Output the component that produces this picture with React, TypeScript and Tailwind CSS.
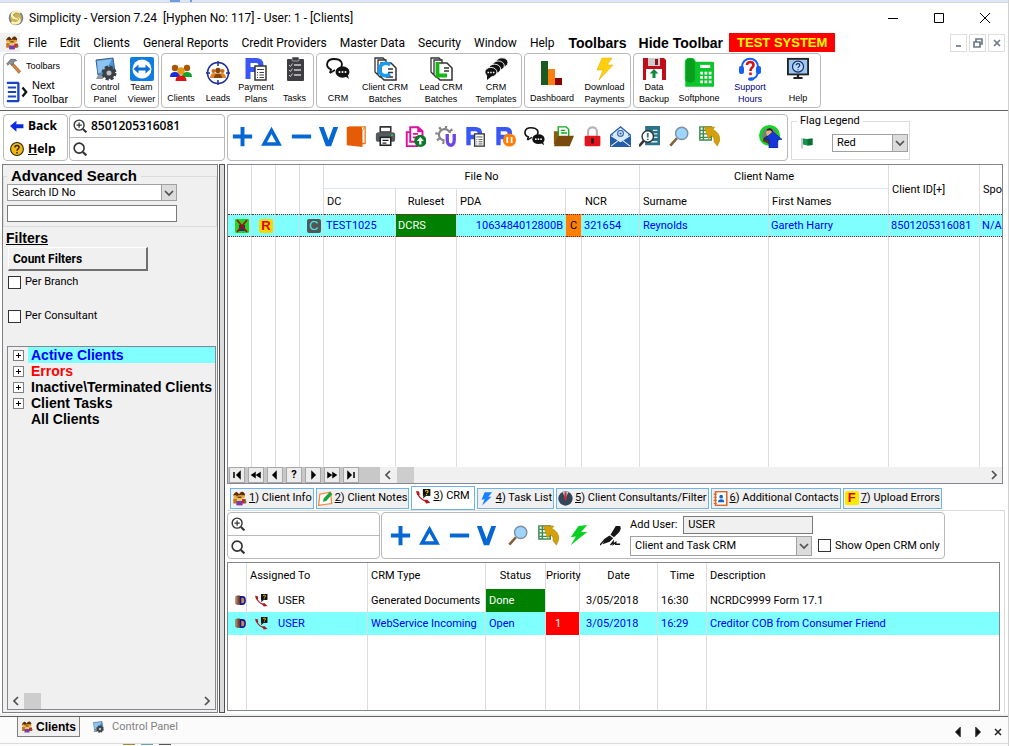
import { clsx } from "clsx";
import type { ReactNode } from "react";

const BLUE = "#0567d3";

const art: Record<string, ReactNode> = {
  people: (
    <>
      <circle cx="7" cy="6" r="4" fill="#b5651d" />
      <circle cx="16" cy="5" r="4" fill="#8b4a12" />
      <circle cx="12" cy="10" r="5" fill="#e0a020" />
      <path d="M2 6 L7 1 L11 5 L17 1 L21 5 L19 9 L15 6 L9 7 L4 11 Z" fill="#5a2d0c" />
      <path d="M2 12 H8 V20 H2 Z" fill="#c87818" />
      <path d="M16 13 H22 V20 H16 Z" fill="#e01818" />
      <path d="M7 16 H17 V23 H7 Z" fill="#7c3ca8" />
      <circle cx="12" cy="12" r="4" fill="#f4c060" />
      <circle cx="5" cy="9" r="2.500" fill="#f0b040" />
      <circle cx="18" cy="9" r="2.500" fill="#e8a830" />
      <path d="M9 9 H15 V11 H9 Z" fill="#4a2a10" />
      <path d="M19 16 H23 V19 H19 Z" fill="#2a9a2a" />
    </>
  ),
  coin: (
    <>
      <circle cx="12" cy="12" r="11" fill="#77838d" />
      <circle cx="12" cy="12" r="8.500" fill="#c9b45a" />
      <path d="M18 5 C12 0 4 5 7 10 C9 13 16 11 17 15 C18 19 11 22 5 18" fill="none" stroke="#fff3b0" strokeWidth="4" />
      <path d="M17 6 C12 3 7 5 9 9 C11 12 17 11 16 15" fill="none" stroke="#85702a" strokeWidth="1" />
    </>
  ),
  hammer: (
    <>
      <path d="M10 7 L22 20 L19 23 L8 10 Z" fill="#d9823b" stroke="#9c5520" />
      <path d="M1 9 L7 2 L14 2 L16 4 L12 5 L11 9 L8 11 L6 8 L3 11 Z" fill="#8a8f94" stroke="#5c6064" />
    </>
  ),
  nextBar: (
    <>
      <path d="M1 2 H14 M1 22 H14 M13.500 2 V22" fill="none" stroke="#1745c4" strokeWidth="2.500" />
      <path d="M2 7 H11 M2 12 H11 M2 17 H11" stroke="#1745c4" strokeWidth="2.200" />
      <path d="M18 7 L22 12 L18 17" fill="none" stroke="#111" strokeWidth="2.500" />
    </>
  ),
  control: (
    <>
      <path d="M3 3 L20 1 L22 15 L5 18 Z" fill="#4a94dc" stroke="#3f5f85" />
      <path d="M4 4 L19 2 L12 15 L5 16 Z" fill="#8cc3f0" />
      <path d="M5 18 L10 17 L10 22 H3 Z" fill="#8e98a3" />
      <circle cx="16" cy="16" r="6" fill="#3c4146" stroke="#3c4146" strokeWidth="3" strokeDasharray="3 1.700" />
      <circle cx="16" cy="16" r="2.500" fill="#b9c0c7" />
    </>
  ),
  team: (
    <>
      <rect width="24" height="24" rx="2" fill="#0e7de0" />
      <circle cx="12" cy="12" r="9.500" fill="#fff" />
      <path d="M3.500 12 L8.500 7.500 V10.500 H15.500 V7.500 L20.500 12 L15.500 16.500 V13.500 H8.500 V16.500 Z" fill="#0e6fd0" />
    </>
  ),
  clients: (
    <>
      <circle cx="6" cy="7" r="3.200" fill="#a8560c" />
      <circle cx="18" cy="7" r="3.200" fill="#a8560c" />
      <path d="M1 16 Q1 11 6 11 Q11 11 11 16 Z" fill="#1530d8" />
      <path d="M13 16 Q13 11 18 11 Q23 11 23 16 Z" fill="#12a52c" />
      <circle cx="12" cy="10" r="3.700" fill="#e39a14" />
      <path d="M6.500 20 Q6.500 14.500 12 14.500 Q17.500 14.500 17.500 20 Z" fill="#d81616" />
    </>
  ),
  leads: (
    <>
      <circle cx="12" cy="12" r="10.500" fill="#fff" stroke="#1c2f9c" strokeWidth="1.500" />
      <path d="M12 0 V5 M12 19 V24 M0 12 H4 M20 12 H24" stroke="#1c2f9c" strokeWidth="1.500" />
      <circle cx="7.500" cy="10" r="2" fill="#c96a12" />
      <circle cx="16.500" cy="10" r="2" fill="#c96a12" />
      <circle cx="12" cy="9.500" r="2.700" fill="#8a4208" />
      <path d="M4 16 Q5 12 8 12 Q12 12 12 17 H4 Z M20 16 Q19 12 16 12 Q12 12 12 17 H20 Z" fill="#e0862a" />
      <path d="M8 17 Q8 12.500 12 12.500 Q16 12.500 16 17 Z" fill="#8a4208" />
    </>
  ),
  plan: (
    <>
      <path d="M4 22 V3.500 H12 Q17 3.500 17 8 Q17 12.500 12 12.500 H5" fill="none" stroke="#3a56f5" strokeWidth="5" />
      <rect x="11" y="9" width="11" height="14" fill="#fff" stroke="#333" strokeWidth="1.500" />
      <path d="M13 12.500 H20 M15.500 15.500 H20 M15.500 18 H20 M15.500 20.500 H20 M13 15.500 H14 M13 18 H14 M13 20.500 H14" stroke="#444" />
    </>
  ),
  planPause: (
    <>
      <path d="M4 22 V3.500 H12 Q17 3.500 17 8 Q17 12.500 12 12.500 H5" fill="none" stroke="#3a56f5" strokeWidth="5" />
      <circle cx="16.500" cy="16" r="7.500" fill="#ff7d0a" />
      <path d="M14 12.500 V19.500 M19 12.500 V19.500" stroke="#fff" strokeWidth="2" />
    </>
  ),
  tasks: (
    <>
      <rect x="4" y="2" width="17" height="22" rx="1" fill="#3d3d42" />
      <rect x="9" y="0" width="7" height="4" rx="1" fill="#3d3d42" stroke="#c8c8c8" strokeWidth="0.700" />
      <path d="M11 8 H18 M11 13 H18 M11 18 H18" stroke="#cfcfcf" strokeWidth="1.500" />
      <path d="M6 8 L7.500 9.500 L9.500 6.500 M6 13 L7.500 14.500 L9.500 11.500 M6 18 L7.500 19.500 L9.500 16.500" fill="none" stroke="#cfcfcf" />
    </>
  ),
  chat: (
    <>
      <path d="M4 16 L5 12.500 C-1 10 0 2 8 2 C16 2 17 7 15 10" fill="none" stroke="#111" strokeWidth="1.800" />
      <path d="M4 16 L9 13" stroke="#111" strokeWidth="1.500" />
      <ellipse cx="16.500" cy="15" rx="7" ry="5.700" fill="#111" />
      <path d="M19 19 L23 22 L21.500 17 Z" fill="#111" />
      <circle cx="13.500" cy="15" r="1" fill="#fff" />
      <circle cx="16.500" cy="15" r="1" fill="#fff" />
      <circle cx="19.500" cy="15" r="1" fill="#fff" />
    </>
  ),
  batchC: (
    <>
      <path d="M2 1 H10 L12 3 V17 H4 L2 15 Z" fill="#fff" stroke="#333" strokeWidth="1.300" />
      <path d="M5 3 H13 V20 H7 L5 18 Z" fill="#fff" stroke="#333" strokeWidth="1.300" />
      <path d="M8 6 H18 L23 11 V23 H11 L8 20 Z" fill="#fff" stroke="#333" strokeWidth="1.500" />
      <path d="M15 12 H20 M15 15.500 H20 M13 20 H20" stroke="#333" strokeWidth="1.300" />
      <path d="M17 8 C13 4.500 6.500 7 6.500 12.500 C6.500 18 12 20.500 17 17" fill="none" stroke="#169cf5" strokeWidth="3.500" />
    </>
  ),
  batchL: (
    <>
      <path d="M2 1 H10 L12 3 V17 H4 L2 15 Z" fill="#fff" stroke="#333" strokeWidth="1.300" />
      <path d="M5 3 H13 V20 H7 L5 18 Z" fill="#fff" stroke="#333" strokeWidth="1.300" />
      <path d="M8 6 H18 L23 11 V23 H11 L8 20 Z" fill="#fff" stroke="#333" strokeWidth="1.500" />
      <path d="M15 11 H20 M15 14 H20" stroke="#333" strokeWidth="1.300" />
      <path d="M8.500 5 V18.500 H18" fill="none" stroke="#14b814" strokeWidth="3.800" />
    </>
  ),
  templates: (
    <>
      {[0, 1, 2, 3].map((i) => (
        <ellipse key={i} cx={18 - i * 3.7} cy={5.5 + i * 3.2} rx="6" ry="4.700" fill="#111" stroke="#fff" strokeWidth="0.900" />
      ))}
      <path d="M3 18 L3 23 L8 19 Z" fill="#111" />
      <path d="M3.500 15.500 H10.500" stroke="#fff" strokeWidth="1.600" strokeDasharray="1.500 1.200" />
    </>
  ),
  chart: (
    <>
      <rect x="1" y="0" width="7" height="24" fill="#1d5a22" />
      <rect x="8" y="8" width="7" height="16" fill="#ff7f0e" />
      <rect x="15" y="17" width="7" height="7" fill="#8b0000" />
    </>
  ),
  bolt: <path d="M9 1 H19 L14 8 H20 L6 23 L10 13 H4 Z" fill="#ffcf0a" stroke="#d8a800" strokeWidth="0.500" />,
  boltGreen: <path d="M12 1 L22 0 L15 8 L22 8 L3 23 L9 13 L3 14 Z" fill="#08d022" />,
  boltBlue: <path d="M9 2 L21 2 L15 9 L20 9 L5 23 L9 13 L4 14 Z" fill="#1583ff" />,
  floppy: (
    <>
      <path d="M1 1 H22 L24 3 V23 H1 Z" fill="#c00d19" />
      <rect x="6" y="1" width="12" height="8" fill="#ccc" />
      <rect x="13" y="2" width="3" height="6" fill="#8d1118" />
      <rect x="4" y="12" width="16" height="11" fill="#fff" />
      <path d="M12 12 L16.500 16.500 H13.500 V21 H10.500 V16.500 H7.500 Z" fill="#0f8a3c" />
    </>
  ),
  phone: (
    <>
      <path d="M8 3 H23 Q24 3 24 4 V23 H1 V10 H8 Z" fill="#0cc52c" />
      <rect x="1" y="0" width="8" height="20" rx="3.500" fill="#0a9e1e" stroke="#0cc52c" strokeWidth="0.800" />
      <rect x="13" y="5.500" width="8" height="2.500" fill="#fff" />
      <path d="M13 12 H22 M13 15.500 H22 M13 19 H22" stroke="#fff" strokeWidth="2.200" strokeDasharray="2.200 1.200" />
    </>
  ),
  support: (
    <>
      <path d="M4 13 V10 C4 -1 20 -1 20 10 V13 C20 19 18 21 14 22" fill="none" stroke="#1560f0" strokeWidth="2" />
      <rect x="1" y="9" width="5" height="8" rx="2" fill="#1560f0" />
      <rect x="18" y="9" width="5" height="8" rx="2" fill="#1560f0" />
      <ellipse cx="13" cy="22" rx="3" ry="1.800" fill="#1560f0" />
      <path d="M9 8 C9 4 15.500 4 15.500 8 C15.500 10.500 12.500 10.500 12.500 14" fill="none" stroke="#d41414" strokeWidth="2.600" />
      <rect x="11.200" y="15.500" width="2.600" height="2.600" fill="#d41414" />
    </>
  ),
  monitor: (
    <>
      <rect x="1" y="2" width="22" height="17" fill="#9cc7f0" stroke="#222" strokeWidth="2" />
      <circle cx="12" cy="10.500" r="6" fill="#b9dbf8" stroke="#132a6e" strokeWidth="1.300" />
      <path d="M10 9 C10 6.500 14 6.500 14 9 C14 10.500 12 10.500 12 12 M12 13.300 V14.500" fill="none" stroke="#132a6e" strokeWidth="1.300" />
      <path d="M12 19 V22 M7 23 H17" stroke="#222" strokeWidth="2.500" />
    </>
  ),
  plus: <path d="M12 1 V23 M1 12 H23" stroke={BLUE} strokeWidth="4.500" />,
  triangle: <path d="M12 5 L20.500 20.500 H3.500 Z" fill="none" stroke={BLUE} strokeWidth="4" />,
  minus: <path d="M1 12 H23" stroke={BLUE} strokeWidth="4.500" />,
  vee: <path d="M1 1 H6.500 L12 16 L17.500 1 H23 L15 23 H9 Z" fill={BLUE} />,
  door: (
    <>
      <path d="M4 1 H23 V20 H19" fill="none" stroke="#e87818" strokeWidth="1.500" />
      <path d="M2 1 H19 L20 5 V24 L2 22 Z" fill="#e65c05" />
      <path d="M20 5 L23 1" stroke="#e87818" />
    </>
  ),
  printer: (
    <>
      <path d="M6 1 H18 V7 H6 Z" fill="#fff" stroke="#333" strokeWidth="1.800" />
      <rect x="1" y="7" width="22" height="11" rx="3" fill="#555a5f" />
      <rect x="6" y="13" width="12" height="9" fill="#fff" stroke="#222" strokeWidth="1.800" />
      <path d="M8.500 16.500 H15.500 M8.500 19.500 H13" stroke="#222" strokeWidth="1.400" />
      <circle cx="19.500" cy="10.500" r="1.200" fill="#21d04a" />
    </>
  ),
  docUp: (
    <>
      <path d="M2 7 V23 H14 V7 Z" fill="#fff" stroke="#e00e9c" strokeWidth="2.200" />
      <path d="M6 1.500 H15 L20 6 V18 H6 Z" fill="#fff" stroke="#e00e9c" strokeWidth="2.200" />
      <path d="M14 1 V7 H20 Z" fill="#e00e9c" />
      <path d="M9 9 H15 M9 13 H14" stroke="#e00e9c" strokeWidth="2" />
      <circle cx="17.500" cy="17" r="7" fill="#0b7a2a" />
      <path d="M17.500 12.500 L21.500 17 H18.800 V21 H16.200 V17 H13.500 Z" fill="#fff" />
    </>
  ),
  gearU: (
    <>
      <circle cx="11" cy="10" r="6.500" fill="none" stroke="#858585" strokeWidth="2.500" />
      <circle cx="11" cy="10" r="9" fill="none" stroke="#858585" strokeWidth="3.500" strokeDasharray="2.500 4.570" />
      <path d="M11 8 H24 V24 H11 Z" fill="#fff" />
      <path d="M14 9 V16 C14 24 22 24 22 16 V9" fill="none" stroke="#6d45e8" strokeWidth="3.800" />
    </>
  ),
  folder: (
    <>
      <path d="M1 6 H7 V21 H1 Z" fill="#8b5a0c" />
      <path d="M6 1 H15 L18 4 V15 H6 Z" fill="#fff" stroke="#0cae1c" strokeWidth="1.600" />
      <path d="M9 5 H14 M9 8 H16" stroke="#0cae1c" strokeWidth="1.500" />
      <path d="M6 11 H24 L19 23 H1 Z" fill="#7a4a0c" />
    </>
  ),
  lock: (
    <>
      <path d="M7 11 V6 C7 0 17 0 17 6 V11" fill="none" stroke="#b5b5b5" strokeWidth="2.500" />
      <rect x="3" y="11" width="18" height="12" rx="1.500" fill="#e3131b" />
      <path d="M12 14 V20" stroke="#222" strokeWidth="3" />
    </>
  ),
  mail: (
    <>
      <path d="M0 10 L12 0 L24 10 V24 H0 Z" fill="#255ba8" />
      <path d="M3 9 L12 2 L21 9 V12 L12 18 L3 12 Z" fill="#d7ebfb" />
      <circle cx="12" cy="8.500" r="3.300" fill="none" stroke="#255ba8" strokeWidth="1.200" />
      <circle cx="12" cy="8.500" r="1.200" fill="#255ba8" />
      <path d="M1 11 L12 18 L23 11 M1 23 L9 17 M23 23 L15 17" fill="none" stroke="#eaf4fc" strokeWidth="1.200" />
    </>
  ),
  audit: (
    <>
      <rect x="7" y="0" width="17" height="22" fill="#2b7389" />
      <path d="M16 5 H21 M17 9 H21 M17 13 H21 M13 18 H21" stroke="#dcecf0" strokeWidth="1.500" />
      <circle cx="10" cy="12" r="6.500" fill="#fff" stroke="#333" strokeWidth="1.600" />
      <path d="M10 8 V13 M10 14.500 V16" stroke="#2b7389" strokeWidth="2" />
      <path d="M5.500 17 L0 23" stroke="#333" strokeWidth="3" />
    </>
  ),
  find: (
    <>
      <path d="M9 14 L1.500 22.500" stroke="#83603a" strokeWidth="3" />
      <circle cx="14.500" cy="8.500" r="7" fill="#9fd4fb" stroke="#7d8fa0" strokeWidth="1.600" />
    </>
  ),
  excel: (
    <>
      <path d="M1 1 H14 V16 H1 Z M1 5 H14 M1 9 H14 M1 13 H14 M5 1 V16" fill="#fff" stroke="#3a8c50" strokeWidth="1.700" />
      <path d="M6 1 H18 L16 4 Q24 8 24 16 L21 23 L17 18 Q18 13 14 11 L11 15 Z" fill="#d3a00c" stroke="#a97c00" strokeWidth="0.500" />
    </>
  ),
  userUp: (
    <>
      <circle cx="11" cy="11" r="9.500" fill="#6b8a70" stroke="#18d428" strokeWidth="3" />
      <path d="M4 17 Q4 11 11 11 Q18 11 18 17 L11 20 Z" fill="#5a3a28" />
      <circle cx="11" cy="8" r="3.500" fill="#e3b082" />
      <path d="M7.500 6 Q11 1 14.500 6 V8 L12 5.500 Z" fill="#1b1b1b" />
      <path d="M14.500 7 L24 15 H19.500 V24 H10.500 V15 H5.500 Z" fill="#1438dc" stroke="#0a1a78" strokeWidth="0.700" />
    </>
  ),
  pen: (
    <>
      <path d="M18 1 L23 1 Q25 5 21 9 L16 14 L12 11 Z" fill="#161616" />
      <path d="M11 12 L15 15 L11 19 L3 22 L6 15 Z" fill="#161616" />
      <path d="M0 23 L6 16" stroke="#161616" strokeWidth="1.500" />
      <path d="M12 23 L15 19 V22 L18 20 V22 H23" fill="none" stroke="#161616" strokeWidth="1.700" />
    </>
  ),
  back: <path d="M0 12 L11 3 V9 H23 V16 H11 V22 Z" fill="#0a2be0" />,
  help: (
    <>
      <circle cx="12" cy="12" r="11" fill="#f1b713" stroke="#2b2410" strokeWidth="1.800" />
      <path d="M8.500 9.500 C8.500 5 15.500 5 15.500 9.500 C15.500 12 12 12 12 15 M12 17 V19.500" fill="none" stroke="#2b2410" strokeWidth="2.500" />
    </>
  ),
  zoomIn: (
    <>
      <circle cx="10.500" cy="10.500" r="8.500" fill="none" stroke="#333" strokeWidth="2.400" />
      <path d="M17 17 L23 23" stroke="#333" strokeWidth="3.500" />
      <path d="M10.500 6 V15 M6 10.500 H15" stroke="#333" strokeWidth="2.200" />
    </>
  ),
  zoom: (
    <>
      <circle cx="10.500" cy="10.500" r="8.500" fill="none" stroke="#333" strokeWidth="2.800" />
      <path d="M17 17 L23 23" stroke="#333" strokeWidth="3.800" />
    </>
  ),
  flag: (
    <>
      <path d="M2 2 V23" stroke="#8d98a3" strokeWidth="2" />
      <path d="M4 3 L13 4 L23 3 V16 L13 17 L4 15 Z" fill="#13924b" />
      <path d="M13 4 L23 3 V16 L13 17 Z" fill="#0b6f36" />
    </>
  ),
  notes: (
    <>
      <path d="M3 5 L20 2 L22 20 L1 23 Z" fill="#fff" stroke="#f08a3c" strokeWidth="2" />
      <path d="M8 17 L9 12 L19 1 L23 5 L13 16 Z" fill="#18a53a" />
    </>
  ),
  call: (
    <>
      <path d="M3 6 Q4 15 16 20" fill="none" stroke="#b01820" strokeWidth="2" />
      <path d="M0 3 L5 4 L6 9 L2 10 Z M13 17 L18 17 L23 22 L16 23 Z" fill="#b01820" />
      <rect x="11" y="0" width="12" height="11" fill="#111" />
      <path d="M15 4 Q15 2 17 2 Q20 2 19 5 L17 6.500 M17 8 V9.500" fill="none" stroke="#f5d020" strokeWidth="1.700" />
      <path d="M12 11 L11 15 L16 11 Z" fill="#111" />
    </>
  ),
  consultant: (
    <>
      <circle cx="12" cy="12" r="11.500" fill="#33475b" />
      <path d="M7 1 L12 12 L17 1 Z" fill="#c8d0d8" />
      <path d="M10.500 2 H13.500 L14 12 L12 16 L10 12 Z" fill="#d02a2a" />
    </>
  ),
  contact: (
    <>
      <rect x="4" y="1" width="18" height="22" fill="#fff" stroke="#d8682a" strokeWidth="2.500" />
      <path d="M1 5 H6 M1 10 H6 M1 15 H6 M1 20 H6" stroke="#d8682a" strokeWidth="1.800" />
      <circle cx="13" cy="9" r="3" fill="#1565c0" />
      <path d="M8 18 Q8 13 13 13 Q18 13 18 18 Z" fill="#1565c0" />
    </>
  ),
  book: (
    <>
      <path d="M1 3 L5 1 H11 V21 H4 L1 18 Z" fill="#7b4b25" />
      <path d="M4 3 V19" stroke="#c9a27a" strokeWidth="2" />
      <path d="M12 4 H16 Q22 4 22 12 Q22 20 16 20 H12 Z" fill="#c58a5a" stroke="#14149a" strokeWidth="3.500" />
    </>
  ),
};

function Icon({ name, className = "size-6" }: { name: string; className?: string }) {
  return (
    <svg viewBox="0 0 24 24" className={clsx("shrink-0", className)} aria-hidden="true">
      {art[name]}
    </svg>
  );
}

const menu = [
  "File", "Edit", "Clients", "General Reports", "Credit Providers",
  "Master Data", "Security", "Window", "Help",
];

type Tool = { icon: string; label: string; width: string; top?: string; size?: string; tone?: string };

const toolGroups: Tool[][] = [
  [
    { icon: "control", label: "Control Panel", width: "w-10" },
    { icon: "team", label: "Team Viewer", width: "w-[33px]" },
  ],
  [
    { icon: "clients", label: "Clients", width: "w-[38px]", top: "pt-[7px]" },
    { icon: "leads", label: "Leads", width: "w-9", top: "pt-[7px]" },
    { icon: "plan", label: "Payment Plans", width: "w-10" },
    { icon: "tasks", label: "Tasks", width: "w-[37px]" },
  ],
  [
    { icon: "chat", label: "CRM", width: "w-[42px]" },
    { icon: "batchC", label: "Client CRM Batches", width: "w-[52px]" },
    { icon: "batchL", label: "Lead CRM Batches", width: "w-[60px]" },
    { icon: "templates", label: "CRM Templates", width: "w-[50px]" },
  ],
  [
    { icon: "chart", label: "Dashboard", width: "w-[54px]", top: "pt-[7px]" },
    { icon: "bolt", label: "Download Payments", width: "w-[51px]" },
  ],
  [
    { icon: "floppy", label: "Data Backup", width: "w-10" },
    { icon: "phone", label: "Softphone", width: "w-[50px]", top: "pt-1", size: "size-[30px]" },
    { icon: "support", label: "Support Hours", width: "w-[52px]", tone: "text-[#000080]" },
    { icon: "monitor", label: "Help", width: "w-11", size: "size-[22px]" },
  ],
];

const actions = [
  ["plus", "w-7"], ["triangle", "w-[30px]"], ["minus", "w-[30px]"], ["vee", "w-6"],
  ["door", "w-[30px]"], ["printer", "w-[30px]"], ["docUp", "w-[30px]"], ["gearU", "w-[30px]"],
  ["plan", "w-[30px]"], ["planPause", "w-[30px]"], ["chat", "w-7"], ["folder", "w-[30px]"],
  ["lock", "w-7"], ["mail", "w-7"], ["audit", "w-[30px]"], ["find", "w-[30px]"], ["excel", "w-[30px]"],
];

const crmActions = [
  ["plus", "w-7"], ["triangle", "w-[30px]"], ["minus", "w-[30px]"], ["vee", "w-6"],
  ["find", "w-10"], ["excel", "w-5"], ["boltGreen", "w-10"], ["pen", "w-6"],
];

const tree = [
  { label: "Active Clients", tone: "text-[#0000ff] bg-[#80ffff]", open: true },
  { label: "Errors", tone: "text-[#ff0000]", open: true },
  { label: "Inactive\\Terminated Clients", tone: "", open: true },
  { label: "Client Tasks", tone: "", open: true },
  { label: "All Clients", tone: "", open: false },
];

const tabs = [
  { icon: "people", label: "Client Info" },
  { icon: "notes", label: "Client Notes" },
  { icon: "call", label: "CRM" },
  { icon: "boltBlue", label: "Task List" },
  { icon: "consultant", label: "Client Consultants/Filter" },
  { icon: "contact", label: "Additional Contacts" },
  { icon: "", label: "Upload Errors" },
];

const crmRows = [
  { type: "Generated Documents", status: "Done", priority: "", date: "3/05/2018", time: "16:30", text: "NCRDC9999 Form 17.1" },
  { type: "WebService Incoming", status: "Open", priority: "1", date: "3/05/2018", time: "16:29", text: "Creditor COB from Consumer Friend" },
];

const navButtons = [
  { label: "First", d: "M3 3 V9 M9 3 L6 6 L9 9 Z" },
  { label: "Page back", d: "M5 4 L2 6 L5 8 Z M10 4 L7 6 L10 8 Z" },
  { label: "Previous", d: "M7 3 L4 6 L7 9 Z" },
  { label: "Find", d: "" },
  { label: "Next", d: "M5 3 L8 6 L5 9 Z" },
  { label: "Page forward", d: "M2 4 L5 6 L2 8 Z M7 4 L10 6 L7 8 Z" },
  { label: "Last", d: "M3 3 L6 6 L3 9 Z M9 3 V9" },
];

function Chevron({ d }: { d: string }) {
  return (
    <svg viewBox="0 0 10 10" className="size-2.5 shrink-0" aria-hidden="true">
      <path d={d} fill="none" stroke="#505050" strokeWidth="1.700" />
    </svg>
  );
}

function Select({ label, value, className }: { label: string; value: string; className?: string }) {
  return (
    <div className={clsx("relative flex", className)}>
      <select aria-label={label} className="w-full appearance-none border border-[#a0a0a0] bg-white pl-1 outline-none">
        <option>{value}</option>
      </select>
      <span className="pointer-events-none absolute inset-y-0 right-0 flex w-4 items-center justify-center border border-[#a0a0a0] bg-[#dcdcdc]">
        <Chevron d="M1 3 L5 7 L9 3" />
      </span>
    </div>
  );
}

function SearchPair({ id, value }: { id: string; value?: string }) {
  return (
    <div className="flex h-[47px] w-full flex-col rounded-[4px] border border-[#b9b9b9]">
      <label className="flex flex-1 items-center gap-1 border-b border-[#b9b9b9] pl-[3px]">
        <Icon name="zoomIn" className="size-[14px]" />
        <input id={`${id}-in`} aria-label="Search exact" defaultValue={value} className="w-full min-w-0 font-['Open_Sans',sans-serif] text-xs font-semibold outline-none" />
      </label>
      <label className="flex flex-1 items-center gap-1 pl-[3px]">
        <Icon name="zoom" className="size-[14px]" />
        <input id={`${id}-all`} aria-label="Search" className="w-full min-w-0 outline-none" />
      </label>
    </div>
  );
}

function ClientGrid() {
  const th = "border-[#dcdcdc] font-normal";
  const td = "overflow-hidden border-y border-r border-r-[#c8dede] border-y-[#802020] [border-top-style:dotted] [border-bottom-style:dotted] px-0.5";
  return (
    <div className="flex min-h-0 flex-1 flex-col border border-[#828790]">
      <div className="min-h-0 flex-1 overflow-hidden">
        <table className="h-full w-full table-fixed border-separate border-spacing-0 whitespace-nowrap">
          <colgroup>
            <col className="w-6" /><col className="w-6" /><col className="w-6" /><col className="w-6" />
            <col className="w-[72px]" /><col className="w-[61px]" /><col className="w-[109px]" />
            <col className="w-4" /><col className="w-[58px]" /><col className="w-[129px]" />
            <col className="w-[120px]" /><col className="w-[91px]" /><col />
          </colgroup>
          <thead>
            <tr className="h-6">
              {[0, 1, 2, 3].map((i) => <th key={i} rowSpan={2} className={clsx(th, "border-r")} />)}
              <th colSpan={5} className={clsx(th, "border-r border-b border-b-[#d8e6f2]")}>File No</th>
              <th colSpan={2} className={clsx(th, "border-r border-b border-b-[#d8e6f2]")}>Client Name</th>
              <th rowSpan={2} className={clsx(th, "border-r pl-[3px] text-left")}>Client ID[+]</th>
              <th rowSpan={2} className={clsx(th, "pl-[3px] text-left")}>Spo</th>
            </tr>
            <tr className="h-[25px]">
              <th className={clsx(th, "border-r pl-[3px] text-left")}>DC</th>
              <th className={clsx(th, "border-r")}>Ruleset</th>
              <th className={clsx(th, "border-r pl-[3px] text-left")}>PDA</th>
              <th className={th} />
              <th className={clsx(th, "border-r pl-[3px] text-left")}>NCR</th>
              <th className={clsx(th, "border-r pl-[3px] text-left")}>Surname</th>
              <th className={clsx(th, "border-r pl-[3px] text-left")}>First Names</th>
            </tr>
          </thead>
          <tbody>
            <tr className="h-[23px] bg-[#80ffff] text-[#0000ff]">
              <td className={td}>
                <svg viewBox="0 0 14 14" className="ml-auto size-3.5">
                  <rect width="14" height="14" rx="1" fill="#2fd01c" />
                  <path d="M4 6 H10 V12 H4 Z" fill="#1d2f8a" />
                  <path d="M2 1 L12 13 M12 1 L2 13" stroke="#a01408" strokeWidth="1.800" />
                </svg>
              </td>
              <td className={td}>
                <div className="ml-auto size-3.5 rounded-xs bg-[#f5d800] text-center font-['Liberation_Sans',sans-serif] text-[13px] leading-[14px] font-bold text-[#e00000]">R</div>
              </td>
              <td className={td} />
              <td className={td}>
                <div className="ml-auto size-3.5 rounded-xs bg-[#555] text-center font-['Liberation_Sans',sans-serif] text-[13px] leading-[14px] text-[#40e8f0]">C</div>
              </td>
              <td className={td}>TEST1025</td>
              <td className={clsx(td, "bg-[#008000] text-white")}>DCRS</td>
              <td className={clsx(td, "text-right")}>1063484012800B</td>
              <td className={clsx(td, "bg-[#ff8000] text-center text-black")}>C</td>
              <td className={td}>321654</td>
              <td className={clsx(td, "pl-[3px]")}>Reynolds</td>
              <td className={td}>Gareth Harry</td>
              <td className={td}>8501205316081</td>
              <td className={clsx(td, "border-r-0")}>N/A</td>
            </tr>
            <tr>
              {Array.from({ length: 13 }, (_, i) => (
                <td key={i} className={clsx(i < 12 && "border-r border-[#dcdcdc]")} />
              ))}
            </tr>
          </tbody>
        </table>
      </div>
      <div className="flex h-4 items-center bg-[#f0f0f0]">
        <div className="flex h-4 w-[152px] items-center gap-[3px] bg-[#c8c8c8] pl-px">
          {navButtons.map((b) => (
            <button key={b.label} aria-label={b.label} className="flex h-4 w-4 items-center justify-center border border-[#a8a8a8] bg-[#ececec] text-[11px] font-bold">
              {b.d ? (
                <svg viewBox="0 0 12 12" className="size-3 shrink-0"><path d={b.d} stroke="#000" strokeWidth="1.500" /></svg>
              ) : "?"}
            </button>
          ))}
        </div>
        <div className="flex h-4 flex-1 items-center pr-[3px] pl-[3px]">
          <Chevron d="M7 1 L3 5 L7 9" />
          <span className="ml-1 h-4 w-[17px] bg-[#cdcdcd]" />
          <span className="ml-auto flex"><Chevron d="M3 1 L7 5 L3 9" /></span>
        </div>
      </div>
    </div>
  );
}

function CrmGrid() {
  const heads = ["", "Assigned To", "CRM Type", "Status", "Priority", "Date", "Time", "Description"];
  const headAlign = ["", "pl-[3px] text-left", "pl-[3px] text-left", "text-center", "text-center", "text-center", "text-center", "pl-[3px] text-left"];
  return (
    <div className="mr-[3px] mb-0.5 flex-1 overflow-hidden border border-[#828790]">
      <table className="h-full w-full table-fixed border-separate border-spacing-0 whitespace-nowrap">
        <colgroup>
          <col className="w-[19px]" /><col className="w-[121px]" /><col className="w-[118px]" /><col className="w-[60px]" />
          <col className="w-[34px]" /><col className="w-[78px]" /><col className="w-[49px]" /><col />
        </colgroup>
        <thead>
          <tr className="h-[26px]">
            {heads.map((h, i) => (
              <th key={i} className={clsx("font-normal", headAlign[i], i < 7 && "border-r border-[#dcdcdc]")}>{h}</th>
            ))}
          </tr>
        </thead>
        <tbody className="[&_td]:border-[#dcdcdc] [&_td:not(:last-child)]:border-r">
          {crmRows.map((r, i) => (
            <tr key={r.type} className={clsx("h-[23px]", i === 1 && "bg-[#80ffff] text-[#0000ff]")}>
              <td className="pl-[7px]"><Icon name="book" className="size-[11px]" /></td>
              <td>
                <div className="flex items-center gap-2.5 pl-2"><Icon name="call" className="size-[13px]" />USER</div>
              </td>
              <td className="pl-[3px]">{r.type}</td>
              <td className={clsx("pl-[3px]", i === 0 && "bg-[#008000] text-white")}>{r.status}</td>
              <td className={clsx("pl-[9px] text-white", r.priority && "bg-[#ff0000]")}>{r.priority}</td>
              <td className="pl-1.5">{r.date}</td>
              <td className="pl-[3px]">{r.time}</td>
              <td className="pl-[3px]">{r.text}</td>
            </tr>
          ))}
          <tr>
            {heads.map((_, i) => <td key={i} />)}
          </tr>
        </tbody>
      </table>
    </div>
  );
}

function Sidebar() {
  return (
    <aside className="flex w-[216px] shrink-0 flex-col border border-[#808080] bg-[#f0f0f0]">
      <fieldset className="mt-[3px] min-w-0 border border-[#dcdcdc] pb-1 pl-[3px]">
        <legend className="px-1 font-['Liberation_Sans',sans-serif] text-[15px] leading-4 font-bold">Advanced Search</legend>
        <Select label="Search field" value="Search ID No" className="h-[17px] w-[170px]" />
        <input aria-label="Search value" className="mt-1 block h-[17px] w-[170px] border border-[#7a7a7a] bg-white px-1 outline-none" />
      </fieldset>
      <h2 className="mt-[3px] pl-[3px] font-['Liberation_Sans',sans-serif] text-[14px] leading-4 font-bold underline">Filters</h2>
      <button className="mt-px ml-[5px] h-6 w-[140px] border-t border-r-2 border-b-2 border-l border-t-white border-r-[#707070] border-b-[#707070] border-l-white pl-1 text-left text-xs font-bold">
        Count Filters
      </button>
      <label className="mt-1 ml-[5px] flex items-center gap-1">
        <input type="checkbox" className="size-[13px] appearance-none border border-[#333] bg-white" />
        Per Branch
      </label>
      <label className="mt-5 ml-[5px] flex items-center gap-1">
        <input type="checkbox" className="size-[13px] appearance-none border border-[#333] bg-white" />
        Per Consultant
      </label>
      <div className="mt-[23px] mr-px mb-0.5 ml-1 flex flex-1 flex-col overflow-hidden border border-[#828790]">
        <ul className="flex-1 overflow-hidden font-['Liberation_Sans',sans-serif] text-[14px] leading-4 font-bold whitespace-nowrap">
          {tree.map((n) => (
            <li key={n.label} className="flex h-4 items-center pl-[5px]">
              {n.open ? (
                <button aria-label={`Expand ${n.label}`} className="flex size-[11px] shrink-0 items-center justify-center border border-[#808080] bg-white">
                  <svg viewBox="0 0 7 7" className="size-[7px] shrink-0"><path d="M3.500 1 V6 M1 3.500 H6" stroke="#000" /></svg>
                </button>
              ) : (
                <span className="w-[11px] shrink-0" />
              )}
              <span className={clsx("ml-1 flex-1 pl-[3px]", n.tone)}>{n.label}</span>
            </li>
          ))}
        </ul>
        <div className="flex h-4 items-center px-[3px]">
          <Chevron d="M7 1 L3 5 L7 9" />
          <span className="ml-[3px] h-4 w-[17px] bg-[#cdcdcd]" />
          <span className="ml-auto flex"><Chevron d="M3 1 L7 5 L3 9" /></span>
        </div>
      </div>
    </aside>
  );
}

export default function App() {
  return (
    <div className="flex h-screen min-h-[500px] flex-col overflow-hidden border-r border-[#d0d0d0] bg-white font-[Roboto,sans-serif] text-[11px] leading-[14px] text-black">
      <div className="flex h-0.5 gap-2.5 bg-[#dbe7f8] pl-[170px]">
        <span className="w-2.5 bg-[#6b9be0]" />
        <span className="w-0.5 bg-[#6b9be0]" />
      </div>

      <header className="flex h-[31px] items-center border-t border-[#d8d8d8] pl-2 text-xs">
        <Icon name="coin" className="size-4" />
        <h1 className="ml-[5px] whitespace-pre">Simplicity - Version 7.24  [Hyphen No: 117] - User: 1 - [Clients]</h1>
        <div className="ml-auto flex">
          {[["Minimize", "M0 5.500 H10"], ["Maximize", "M0.500 0.500 H9.500 V9.500 H0.500 Z"], ["Close", "M0 0 L10 10 M10 0 L0 10"]].map(([label, d]) => (
            <button key={label} aria-label={label} className="flex h-7 w-[46px] items-center justify-center">
              <svg viewBox="0 0 10 10" className="size-2.5"><path d={d} fill="none" stroke="#000" /></svg>
            </button>
          ))}
        </div>
      </header>

      <div className="flex h-[19px] items-center pr-[3px] whitespace-nowrap">
        <span className="flex h-full w-5 items-center justify-end bg-[#f0f0f0] pr-px"><Icon name="people" className="size-3.5" /></span>
        <nav className="flex items-center gap-[13px] pl-2 text-xs">
          {menu.map((m) => <button key={m}>{m}</button>)}
        </nav>
        <button className="ml-3.5 font-['Liberation_Sans',sans-serif] text-[14px] font-bold">Toolbars</button>
        <button className="ml-3 font-['Liberation_Sans',sans-serif] text-[14px] font-bold">Hide Toolbar</button>
        <strong className="ml-1.5 bg-[#ff0000] px-2 font-['Liberation_Sans',sans-serif] text-[13px] leading-[19px] text-[#ffff00]">TEST SYSTEM</strong>
        <div className="ml-auto flex gap-0.5">
          {[["Minimize child", "M2 8 H7"], ["Restore child", "M1 4 H7 V9 H1 Z M3 4 V1 H9 V6 H7"], ["Close child", "M2 2 L8 8 M8 2 L2 8"]].map(([label, d]) => (
            <button key={label} aria-label={label} className="flex h-[18px] w-[17px] items-center justify-center border border-[#dedede]">
              <svg viewBox="0 0 10 10" className="size-2.5"><path d={d} fill="none" stroke="#6d7a88" strokeWidth="1.700" /></svg>
            </button>
          ))}
        </div>
      </div>

      <div className="flex h-[59px] gap-0.5 border-b border-[#606060] pt-px pl-[3px] font-['Liberation_Sans',sans-serif] text-[9px] leading-3">
        <div className="flex h-[55px] w-[79px] flex-col rounded-[4px] border border-[#b9b9b9] pt-1 pl-0.5">
          <button className="flex items-center gap-1"><Icon name="hammer" className="size-4" />Toolbars</button>
          <button className="mt-1 flex items-center gap-1 text-left text-[11px] leading-[14px]">
            <Icon name="nextBar" className="size-[22px]" />
            <span className="w-10">Next Toolbar</span>
          </button>
        </div>
        {toolGroups.map((g, i) => (
          <div key={i} className="flex h-[55px] rounded-[4px] border border-[#b9b9b9]">
            {g.map((t) => (
              <button key={t.label} className={clsx("flex flex-col items-center pb-[3px]", t.width, t.top ?? "pt-[3px]", t.tone)}>
                <Icon name={t.icon} className={t.size} />
                <span className="mt-auto">{t.label}</span>
              </button>
            ))}
          </div>
        ))}
      </div>

      <div className="flex h-[53px] pt-[3px] pl-[3px]">
        <div className="flex h-[47px] w-[65px] shrink-0 flex-col justify-around rounded-[4px] border border-[#b9b9b9] pl-1.5 font-['Open_Sans',sans-serif] text-xs leading-4 font-bold">
          <button className="flex items-center gap-1"><Icon name="back" className="size-3.5" />Back</button>
          <button className="flex items-center gap-1"><Icon name="help" className="size-3.5" /><span><u>H</u>elp</span></button>
        </div>
        <div className="ml-px flex w-[156px] shrink-0"><SearchPair id="client" value="8501205316081" /></div>
        <div className="ml-0.5 flex h-[47px] w-[561px] items-center rounded-[4px] border border-[#b9b9b9] pr-[5px] pb-0.5">
          {actions.map(([name, width]) => (
            <button key={name} aria-label={name} className={clsx("flex shrink-0 justify-center", width)}>
              <Icon name={name} className="size-[21px]" />
            </button>
          ))}
          <button aria-label="userUp" className="ml-auto"><Icon name="userUp" className="size-[23px]" /></button>
        </div>
        <fieldset className="ml-[3px] h-[46px] w-[119px] border border-[#dcdcdc]">
          <legend className="ml-[5px] px-[3px]">Flag Legend</legend>
          <div className="mt-1.5 flex items-center pr-px pl-[9px]">
            <Icon name="flag" className="size-3" />
            <Select label="Flag Legend" value="Red" className="ml-auto h-[18px] w-[76px]" />
          </div>
        </fieldset>
      </div>

      <main className="flex min-h-0 flex-1 pl-0.5">
        <Sidebar />
        <div className="mx-px w-1.5 shrink-0 border border-[#505050] bg-[#dcdcdc]" />
        <div className="ml-px flex min-w-0 flex-1 flex-col pr-[3px]">
          <div className="mr-[2px] flex min-h-0 flex-1"><ClientGrid /></div>
          <div className="mt-0.5 flex items-center gap-0.5 pl-[3px] whitespace-nowrap" role="tablist">
            {tabs.map((t, i) => (
              <button
                key={t.label}
                role="tab"
                aria-selected={i === 2}
                className={clsx(
                  "flex items-center gap-0.5 border border-[#6cb4ee]",
                  i === 2 ? "h-6 bg-white px-1 pb-1" : "h-[21px] bg-[#f0f0f0] px-px",
                )}
              >
                {t.icon ? (
                  <Icon name={t.icon} className="size-[15px]" />
                ) : (
                  <span className="size-3.5 rounded-xs bg-[#fbe800] font-['Liberation_Sans',sans-serif] text-[13px] leading-[14px] font-bold text-[#d80000]">F</span>
                )}
                <span><u>{i + 1}</u>) {t.label}</span>
              </button>
            ))}
          </div>
          <div className="flex h-[203px] flex-col border-t border-r border-[#dcdcdc] pt-px pr-px">
            <div className="flex gap-px">
              <div className="flex w-[153px] shrink-0"><SearchPair id="crm" /></div>
              <div className="flex h-[47px] items-center rounded-[4px] border border-[#b9b9b9] pr-1 pl-1">
                {crmActions.map(([name, width]) => (
                  <button key={name} aria-label={name} className={clsx("flex shrink-0 justify-center", width)}>
                    <Icon name={name} className="size-[21px]" />
                  </button>
                ))}
                <div className="ml-2 flex flex-col gap-0.5">
                  <label className="flex items-center gap-1.5">
                    Add User:
                    <input readOnly value="USER" className="h-[18px] w-[130px] border border-[#7a7a7a] bg-[#f0f0f0] px-1 outline-none" />
                  </label>
                  <div className="flex items-center gap-1.5">
                    <Select label="CRM filter" value="Client and Task CRM" className="h-5 w-[182px]" />
                    <label className="flex items-center gap-1 whitespace-nowrap">
                      <input type="checkbox" className="size-[13px] appearance-none border border-[#333] bg-white" />
                      Show Open CRM only
                    </label>
                  </div>
                </div>
              </div>
            </div>
            <div className="mt-[3px] flex flex-1"><CrmGrid /></div>
          </div>
        </div>
      </main>

      <footer className="mt-px flex h-8 flex-col border-t-2 border-[#f0f0f0] bg-[#fbfbfb]">
        <div className="flex h-[28px] items-start border-t border-b border-t-[#606060] border-b-[#dcdcdc] pl-[17px]">
          <button className="flex h-5 items-center gap-[3px] border-r border-b border-l border-[#808080] bg-[#f0f0f0] px-[3px] font-['Liberation_Sans',sans-serif] text-xs font-bold">
            <Icon name="people" className="size-3" />
            Clients
          </button>
          <button className="ml-3 flex h-5 items-center gap-2 text-[#808080]">
            <Icon name="control" className="size-3" />
            Control Panel
          </button>
          <div className="mt-2.5 mr-[5px] ml-auto flex gap-2.5">
            {[["Previous tab", "M7 1 L3 5 L7 9 Z"], ["Next tab", "M3 1 L7 5 L3 9 Z"], ["Close tab", "M2 2 L8 8 M8 2 L2 8"]].map(([label, d]) => (
              <button key={label} aria-label={label}>
                <svg viewBox="0 0 10 10" className="size-2.5"><path d={d} stroke="#222" strokeWidth="1.500" /></svg>
              </button>
            ))}
          </div>
        </div>
        <div className="flex h-px gap-1.5 pl-[123px]">
          <span className="w-3 bg-[#a58a3a]" />
          <span className="w-3 bg-[#6aa0b0]" />
          <span className="w-3 bg-[#555]" />
        </div>
      </footer>
    </div>
  );
}
